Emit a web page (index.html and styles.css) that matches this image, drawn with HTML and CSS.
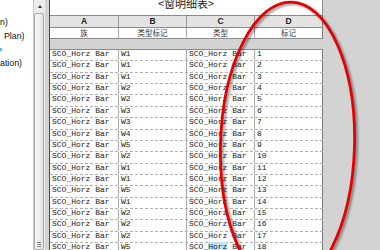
FILE: index.html
```html
<!DOCTYPE html>
<html>
<head>
<meta charset="utf-8">
<link rel="stylesheet" href="styles.css">
</head>
<body>
<div class="app">
  <aside class="tree">
    <div class="tree-items">
      <div class="ti">n)</div>
      <div class="ti ti-indent">Plan)</div>
      <div class="ti"><span class="dot"></span></div>
      <div class="ti">ation)</div>
    </div>
    <div class="scrollbar">
      <div class="sb-btn"><span class="arrow-up"></span></div>
      <div class="sb-thumb"><span class="grip"></span></div>
    </div>
  </aside>
  <main class="view">
    <div class="sched">
      <div class="title">&lt;窗明细表&gt;</div>
      <div class="row letters"><div>A</div><div>B</div><div>C</div><div>D</div></div>
      <div class="row names"><div>族</div><div>类型标记</div><div>类型</div><div>标记</div></div>
      <div class="rows">
        <div class="row data"><div>SCO_Horz Bar</div><div>W1</div><div>SCO_Horz Bar</div><div>1</div></div>
        <div class="row data"><div>SCO_Horz Bar</div><div>W1</div><div>SCO_Horz Bar</div><div>2</div></div>
        <div class="row data"><div>SCO_Horz Bar</div><div>W1</div><div>SCO_Horz Bar</div><div>3</div></div>
        <div class="row data"><div>SCO_Horz Bar</div><div>W2</div><div>SCO_Horz Bar</div><div>4</div></div>
        <div class="row data"><div>SCO_Horz Bar</div><div>W2</div><div>SCO_Horz Bar</div><div>5</div></div>
        <div class="row data"><div>SCO_Horz Bar</div><div>W3</div><div>SCO_Horz Bar</div><div>6</div></div>
        <div class="row data"><div>SCO_Horz Bar</div><div>W3</div><div>SCO_Horz Bar</div><div>7</div></div>
        <div class="row data"><div>SCO_Horz Bar</div><div>W4</div><div>SCO_Horz Bar</div><div>8</div></div>
        <div class="row data"><div>SCO_Horz Bar</div><div>W5</div><div>SCO_Horz Bar</div><div>9</div></div>
        <div class="row data"><div>SCO_Horz Bar</div><div>W2</div><div>SCO_Horz Bar</div><div>10</div></div>
        <div class="row data"><div>SCO_Horz Bar</div><div>W1</div><div>SCO_Horz Bar</div><div>11</div></div>
        <div class="row data"><div>SCO_Horz Bar</div><div>W1</div><div>SCO_Horz Bar</div><div>12</div></div>
        <div class="row data"><div>SCO_Horz Bar</div><div>W5</div><div>SCO_Horz Bar</div><div>13</div></div>
        <div class="row data"><div>SCO_Horz Bar</div><div>W1</div><div>SCO_Horz Bar</div><div>14</div></div>
        <div class="row data"><div>SCO_Horz Bar</div><div>W2</div><div>SCO_Horz Bar</div><div>15</div></div>
        <div class="row data"><div>SCO_Horz Bar</div><div>W2</div><div>SCO_Horz Bar</div><div>16</div></div>
        <div class="row data"><div>SCO_Horz Bar</div><div>W2</div><div>SCO_Horz Bar</div><div>17</div></div>
        <div class="row data"><div>SCO_Horz Bar</div><div>W5</div><div>SCO_<span class="hl">Horz</span> Bar</div><div>18</div></div>
      </div>
    </div>
  </main>
</div>
<svg class="markup" width="380" height="250" viewBox="0 0 380 250">
  <defs>
    <filter id="sh" x="-30%" y="-30%" width="160%" height="160%">
      <feGaussianBlur stdDeviation="1.3"/>
    </filter>
  </defs>
  <g transform="rotate(1.6 287.5 145)">
    <ellipse cx="289.5" cy="146.5" rx="67" ry="143" fill="none" stroke="#000" stroke-opacity="0.4" stroke-width="3" filter="url(#sh)"/>
    <ellipse cx="287.5" cy="145" rx="67" ry="143" fill="none" stroke="#e60000" stroke-width="2.8"/>
  </g>
</svg>
</body>
</html>
```

FILE: styles.css
```css
* { box-sizing: border-box; }
html, body { margin: 0; padding: 0; }
body {
  width: 380px;
  height: 250px;
  overflow: hidden;
  position: relative;
  background: #d3d3d3;
  font-family: "Liberation Sans", sans-serif;
}
.app { display: flex; height: 250px; }

.tree { display: flex; width: 49px; flex: none; background: #d3d3d3; }
.tree-items {
  width: 33px;
  background: #fff;
  padding-top: 16px;
  font-size: 8.8px;
  color: #111;
  overflow: hidden;
}
.ti { height: 13.5px; line-height: 13.5px; white-space: nowrap; }
.ti-indent { padding-left: 4px; }
.dot {
  display: inline-block;
  width: 2px;
  height: 3px;
  background: #4fc3ee;
  vertical-align: middle;
}
.scrollbar {
  width: 12px;
  display: flex;
  flex-direction: column;
  background: #ececec;
  border-left: 1px solid #c4c4c4;
}
.sb-btn {
  height: 13px;
  display: flex;
  align-items: center;
  justify-content: center;
}
.arrow-up {
  width: 0; height: 0;
  border-left: 2.5px solid transparent;
  border-right: 2.5px solid transparent;
  border-bottom: 3px solid #333;
}
.sb-thumb {
  flex: 1;
  margin: 0 1px 0 0;
  border: 1px solid #a9a9a9;
  border-radius: 2px;
  background: linear-gradient(to right, #f6f6f6, #e4e4e4);
  display: flex;
  flex-direction: column;
  justify-content: flex-end;
  align-items: center;
  padding-bottom: 2px;
}
.grip {
  width: 4px;
  height: 5px;
  border-top: 1px solid #8a8a8a;
  border-bottom: 1px solid #8a8a8a;
  background: linear-gradient(#8a8a8a, #8a8a8a) center / 100% 1px no-repeat;
}

.view { flex: 1; border-left: 1px solid #4a4a4a; background: #d3d3d3; }
.sched { width: 273px; }
.title {
  height: 16px;
  background: #fff;
  border-bottom: 1px solid #8a8a8a;
  border-right: 1px solid #8a8a8a;
  text-align: center;
  font-family: "Noto Sans CJK SC", sans-serif;
  font-size: 11px;
  line-height: 7px;
  color: #222;
}
.row { display: grid; grid-template-columns: 69px 68px 68px 68px; }
.letters {
  height: 12px;
  background: #e3e3e3;
  border-bottom: 1px solid #8a8a8a;
}
.letters div {
  border-right: 1px solid #9a9a9a;
  text-align: center;
  font-weight: bold;
  font-size: 8.5px;
  line-height: 11px;
  color: #222;
}
.names {
  height: 11px;
  background: #fff;
  border-bottom: 1px solid #8a8a8a;
  margin-bottom: 10px;
}
.names div {
  border-right: 1px solid #a8a8a8;
  text-align: center;
  font-family: "Noto Sans CJK SC", sans-serif;
  font-size: 7.5px;
  line-height: 10px;
  color: #333;
}
.letters div:last-child, .names div:last-child { border-right-color: #7a7a7a; }
.rows { background: #fff; border-top: 1px solid #8a8a8a; }
.data { height: 11.36px; border-bottom: 1px dashed #b0b0b0; }
.data div {
  border-right: 1px solid #a8a8a8;
  padding-left: 2px;
  font-family: "Liberation Mono", monospace;
  font-size: 8px;
  line-height: 7.5px;
  color: #222;
  white-space: nowrap;
}
.data div:last-child { border-right-color: #7a7a7a; }
.hl { background: #c4e2f6; }
.markup { position: absolute; left: 0; top: 0; pointer-events: none; }
```
